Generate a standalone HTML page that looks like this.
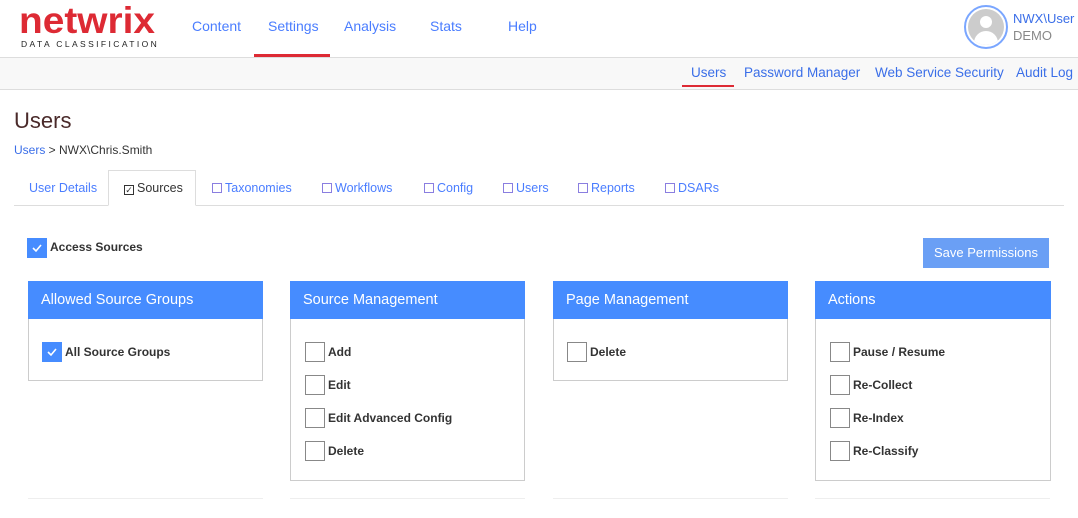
<!DOCTYPE html>
<html><head><style>
*{box-sizing:border-box;margin:0;padding:0}
body{width:1078px;height:518px;overflow:hidden;background:#fff;font-family:"Liberation Sans",sans-serif;color:#333;position:relative}
.a{position:absolute}
.nav{font-size:14px;color:#4a7dff}
.sub{font-size:13.5px;color:#3a6ee8}
.tab{font-size:12.5px;color:#4a7dff;top:181px}
.tb{display:inline-block;width:10px;height:10px;border:1px solid #8a7ee0;vertical-align:-1px;margin-right:3px}
.hdr{background:#468cff;color:#fff;font-size:14.5px;height:38px;line-height:38px;padding-left:13px;top:281px;width:235px}
.box{border:1px solid #ccc;border-top:none;top:319px;width:235px;background:#fff}
.cb{width:20px;height:20px;border:1px solid #888;background:#fff}
.cbc{width:20px;height:20px;background:#468cff}
.lb{font-size:12px;font-weight:bold;color:#333}
.ln{height:1px;background:#eee;top:498px;width:235px}
</style></head><body>
<div class="a" style="left:19px;top:0px;font-size:37px;font-weight:bold;color:#dd2a34;letter-spacing:0px;transform:scaleX(1.05);transform-origin:left">netwrix</div>
<div class="a" style="left:21px;top:39px;font-size:8.5px;letter-spacing:2.4px;color:#222">DATA CLASSIFICATION</div>
<div class="a nav" style="left:192px;top:18px">Content</div>
<div class="a nav" style="left:268px;top:18px">Settings</div>
<div class="a" style="left:254px;top:54px;width:76px;height:3px;background:#dd2a34"></div>
<div class="a nav" style="left:344px;top:18px">Analysis</div>
<div class="a nav" style="left:430px;top:18px">Stats</div>
<div class="a nav" style="left:508px;top:18px">Help</div>
<div class="a" style="left:964px;top:5px;width:44px;height:44px;border-radius:50%;border:2px solid #7aa6ff;background:#fff"></div>
<div class="a" style="left:968px;top:9px;width:36px;height:36px;border-radius:50%;background:#ccc;overflow:hidden">
<div class="a" style="left:12px;top:7px;width:12px;height:12px;border-radius:50%;background:#fff"></div>
<div class="a" style="left:6px;top:22px;width:24px;height:18px;border-radius:12px 12px 0 0;background:#fff"></div></div>
<div class="a" style="left:1013px;top:11px;font-size:13px;color:#3a6ee8">NWX\User</div>
<div class="a" style="left:1013px;top:28px;font-size:13px;color:#888">DEMO</div>
<div class="a" style="left:0;top:57px;width:1078px;height:33px;background:#f8f8f8;border-top:1px solid #ddd;border-bottom:1px solid #ddd"></div>
<div class="a sub" style="left:691px;top:65px">Users</div>
<div class="a" style="left:682px;top:85px;width:52px;height:2px;background:#dd2a34"></div>
<div class="a sub" style="left:744px;top:65px">Password Manager</div>
<div class="a sub" style="left:875px;top:65px">Web Service Security</div>
<div class="a sub" style="left:1016px;top:65px">Audit Log</div>
<div class="a" style="left:14px;top:108px;font-size:22px;color:#4a2a2a">Users</div>
<div class="a" style="left:14px;top:143px;font-size:12px"><span style="color:#3a6ee8">Users</span> &gt; NWX\Chris.Smith</div>
<div class="a" style="left:14px;top:205px;width:1050px;height:1px;background:#ddd"></div>
<div class="a" style="left:108px;top:170px;width:88px;height:36px;border:1px solid #ddd;border-bottom:1px solid #fff;background:#fff"></div>
<div class="a tab" style="left:29px">User Details</div>
<div class="a tab" style="left:124px;color:#333"><span class="tb" style="border-color:#333;font-size:9px;line-height:8px;text-align:center">✓</span>Sources</div>
<div class="a tab" style="left:212px"><span class="tb"></span>Taxonomies</div>
<div class="a tab" style="left:322px"><span class="tb"></span>Workflows</div>
<div class="a tab" style="left:424px"><span class="tb"></span>Config</div>
<div class="a tab" style="left:503px"><span class="tb"></span>Users</div>
<div class="a tab" style="left:578px"><span class="tb"></span>Reports</div>
<div class="a tab" style="left:665px"><span class="tb"></span>DSARs</div>
<div class="a cbc" style="left:27px;top:238px"><svg width="20" height="20"><path d="M6 10l3 3 5-6" stroke="#fff" stroke-width="1.6" fill="none"/></svg></div>
<div class="a lb" style="left:50px;top:240px">Access Sources</div>
<div class="a" style="left:923px;top:238px;width:126px;height:30px;background:#6a9ff5;color:#fff;font-size:13px;line-height:30px;text-align:center">Save Permissions</div>

<div class="a hdr" style="left:28px">Allowed Source Groups</div>
<div class="a box" style="left:28px;height:62px"></div>
<div class="a cbc" style="left:42px;top:342px"><svg width="20" height="20"><path d="M6 10l3 3 5-6" stroke="#fff" stroke-width="1.6" fill="none"/></svg></div>
<div class="a lb" style="left:65px;top:345px">All Source Groups</div>

<div class="a hdr" style="left:290px">Source Management</div>
<div class="a box" style="left:290px;height:162px"></div>
<div class="a cb" style="left:305px;top:342px"></div><div class="a lb" style="left:328px;top:345px">Add</div>
<div class="a cb" style="left:305px;top:375px"></div><div class="a lb" style="left:328px;top:378px">Edit</div>
<div class="a cb" style="left:305px;top:408px"></div><div class="a lb" style="left:328px;top:411px">Edit Advanced Config</div>
<div class="a cb" style="left:305px;top:441px"></div><div class="a lb" style="left:328px;top:444px">Delete</div>

<div class="a hdr" style="left:553px">Page Management</div>
<div class="a box" style="left:553px;height:62px"></div>
<div class="a cb" style="left:567px;top:342px"></div><div class="a lb" style="left:590px;top:345px">Delete</div>

<div class="a hdr" style="left:815px;width:236px">Actions</div>
<div class="a box" style="left:815px;width:236px;height:162px"></div>
<div class="a cb" style="left:830px;top:342px"></div><div class="a lb" style="left:853px;top:345px">Pause / Resume</div>
<div class="a cb" style="left:830px;top:375px"></div><div class="a lb" style="left:853px;top:378px">Re-Collect</div>
<div class="a cb" style="left:830px;top:408px"></div><div class="a lb" style="left:853px;top:411px">Re-Index</div>
<div class="a cb" style="left:830px;top:441px"></div><div class="a lb" style="left:853px;top:444px">Re-Classify</div>

<div class="a ln" style="left:28px"></div><div class="a ln" style="left:290px"></div><div class="a ln" style="left:553px"></div><div class="a ln" style="left:815px"></div>
</body></html>
